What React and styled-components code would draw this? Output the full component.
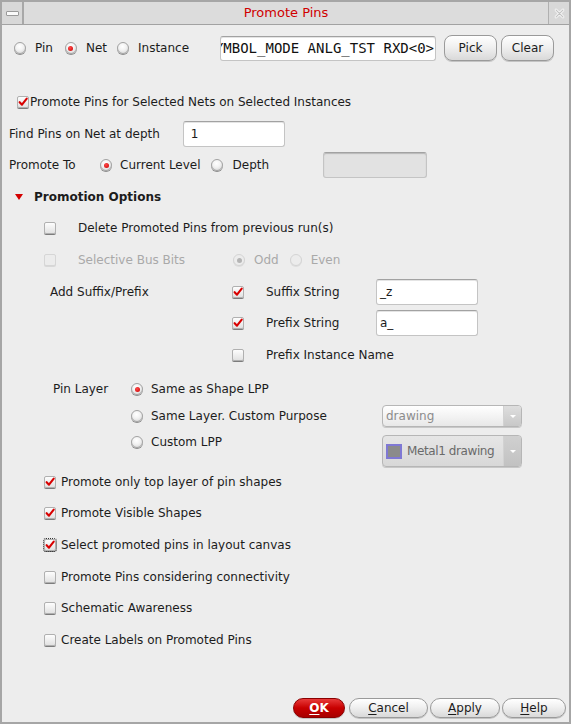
import React from 'react';
import styled, { createGlobalStyle, css } from 'styled-components';

const GlobalStyle = createGlobalStyle`
  html, body {
    margin: 0;
    padding: 0;
    background: #ffffff;
  }
  body {
    font-family: "DejaVu Sans", Verdana, sans-serif;
    font-size: 12px;
    color: #1c1c1c;
  }
`;

const Window = styled.div`
  width: 571px;
  height: 724px;
  box-sizing: border-box;
  border: 2px solid #a6a6a6;
  background: #ededed;
  display: flex;
  flex-direction: column;
`;

const TitleBar = styled.div`
  display: flex;
  height: 22px;
  border-bottom: 1px solid #a2a2a2;
  background: #dcdcdc;
`;

const TitleBox = styled.div`
  width: 20px;
  display: flex;
  align-items: center;
  justify-content: center;
  background: #d8d8d8;
  ${p => (p.$right ? 'border-left: 1px solid #b0b0b0;' : 'border-right: 2px solid #a8a8a8;')}
`;

const MinGlyph = styled.span`
  width: 11px;
  height: 3px;
  border: 1px solid #9a9a9a;
  border-radius: 1px;
  background: #fafafa;
`;

const Title = styled.div`
  flex: 1;
  text-align: center;
  line-height: 22px;
  font-size: 13px;
  color: #d00000;
`;

const Content = styled.div`
  flex: 1;
  display: flex;
  flex-direction: column;
`;

const Row = styled.div`
  display: flex;
  align-items: ${p => (p.$top ? 'flex-start' : 'center')};
  height: ${p => (p.$h ? `${p.$h}px` : 'auto')};
  margin-top: ${p => p.$mt || 0}px;
  padding-left: ${p => p.$pl || 0}px;
  flex-shrink: 0;
`;

const Cell = styled.div`
  display: flex;
  align-items: center;
  height: ${p => (p.$h ? `${p.$h}px` : 'auto')};
  flex-shrink: 0;
`;

const Label = styled.span`
  white-space: nowrap;
  color: ${p => (p.$disabled ? '#a9a9a9' : '#1c1c1c')};
  font-weight: ${p => (p.$bold ? 'bold' : 'normal')};
  width: ${p => (p.$w ? `${p.$w}px` : 'auto')};
  margin-left: ${p => p.$ml || 0}px;
  flex-shrink: 0;
`;

const CheckBox = styled.span`
  width: 12px;
  height: 12px;
  box-sizing: border-box;
  border: 1px solid ${p => (p.$disabled ? '#d6d6d6' : '#b0b0b0')};
  border-radius: 2px;
  background: ${p => (p.$disabled ? '#ececec' : 'linear-gradient(#fdfdfd, #e2e2e2)')};
  box-shadow: 0 1px 0 ${p => (p.$disabled ? '#d8d8d8' : '#7c7c7c')};
  display: flex;
  align-items: center;
  justify-content: center;
  flex-shrink: 0;
  ${p => p.$focus && css`
    outline: 1px dotted #333;
    outline-offset: 0;
  `}
`;

const RadioRing = styled.span`
  width: 12px;
  height: 12px;
  box-sizing: border-box;
  border-radius: 50%;
  border: 1px solid ${p => (p.$disabled ? '#d4d4d4' : '#a2a2a2')};
  background: ${p => (p.$disabled
    ? '#ececec'
    : 'radial-gradient(circle at 45% 35%, #ffffff 0%, #f2f2f2 45%, #cfcfcf 100%)')};
  box-shadow: 0 1px 0 ${p => (p.$disabled ? '#dedede' : '#8e8e8e')};
  display: flex;
  align-items: center;
  justify-content: center;
  flex-shrink: 0;
`;

const RadioDot = styled.span`
  width: 5px;
  height: 5px;
  border-radius: 50%;
  background: ${p => (p.$disabled ? '#b4b4b4' : 'radial-gradient(circle at 40% 35%, #ff4a4a, #c80000)')};
`;

const Option = styled.span`
  display: inline-flex;
  align-items: center;
  gap: ${p => p.$gap || 9}px;
  margin-right: ${p => p.$mr || 0}px;
  flex-shrink: 0;
`;

const Field = styled.div`
  box-sizing: border-box;
  width: ${p => p.$w}px;
  height: ${p => p.$h || 26}px;
  margin-left: ${p => p.$ml || 0}px;
  border: 1px solid #c4c4c4;
  border-top-color: #a2a2a2;
  border-radius: 3px;
  background: ${p => (p.$disabled ? '#e2e2e2' : '#ffffff')};
  box-shadow: ${p => (p.$disabled ? 'inset 0 1px 1px #b8b8b8' : 'inset 0 1px 0 #e4e4e4')};
  display: flex;
  align-items: center;
  justify-content: ${p => (p.$end ? 'flex-end' : 'flex-start')};
  padding: 0 ${p => (p.$end ? 1 : 3)}px 0 3px;
  overflow: hidden;
  white-space: nowrap;
  flex-shrink: 0;
`;

const MonoText = styled.span`
  font-family: "DejaVu Sans Mono", "Liberation Mono", monospace;
  font-size: 14px;
  color: #111;
  flex-shrink: 0;
`;

const Button = styled.button`
  box-sizing: border-box;
  width: ${p => p.$w}px;
  height: ${p => p.$h || 20}px;
  margin-left: ${p => p.$ml || 0}px;
  padding: 0;
  font-family: inherit;
  font-size: 12px;
  border-radius: ${p => (p.$h && p.$h > 22 ? 8 : 10)}px;
  border: 1px solid #9a9a9a;
  color: #1c1c1c;
  background: linear-gradient(#ffffff, #f0f0f0 45%, #d9d9d9);
  box-shadow: 0 1px 0 #c4c4c4;
  flex-shrink: 0;
  ${p => p.$primary && css`
    border-color: #8a0000;
    color: #ffffff;
    font-weight: bold;
    background: linear-gradient(#e83a3a, #c80000 50%, #a80000);
  `}
  u {
    text-decoration-thickness: 1px;
    text-underline-offset: 2px;
  }
`;

const Triangle = styled.span`
  width: 0;
  height: 0;
  border-left: 4.5px solid transparent;
  border-right: 4.5px solid transparent;
  border-top: 6px solid #d40000;
  flex-shrink: 0;
`;

const Combo = styled.div`
  box-sizing: border-box;
  width: 140px;
  height: ${p => p.$h}px;
  margin-left: ${p => p.$ml || 0}px;
  margin-top: ${p => p.$mt || 0}px;
  border: 1px solid #b6b6b6;
  border-radius: 4px;
  background: ${p => (p.$dim ? 'linear-gradient(#e6e6e6, #d8d8d8)' : 'linear-gradient(#ffffff, #e8e8e8)')};
  box-shadow: 0 1px 0 #c8c8c8;
  display: flex;
  overflow: hidden;
  flex-shrink: 0;
`;

const ComboValue = styled.div`
  flex: 1;
  min-width: 0;
  display: flex;
  align-items: center;
  gap: 5px;
  padding-left: 3px;
  white-space: nowrap;
  overflow: hidden;
  color: ${p => (p.$dim ? '#6a6a6a' : '#8c8c8c')};
  font-size: 12px;
  letter-spacing: ${p => (p.$dim ? '-0.4px' : '0')};
`;

const ComboArrow = styled.div`
  width: 17px;
  flex-shrink: 0;
  border-left: 1px solid #d2d2d2;
  background: ${p => (p.$dim ? 'linear-gradient(#d0d0d0, #c2c2c2)' : 'linear-gradient(#dedede, #c8c8c8)')};
  display: flex;
  align-items: center;
  justify-content: center;

  &::after {
    content: '';
    border-left: 3px solid transparent;
    border-right: 3px solid transparent;
    border-top: 3px solid #ffffff;
  }
`;

const Swatch = styled.span`
  width: 16px;
  height: 15px;
  box-sizing: border-box;
  border: 2px solid #7f78d4;
  background: #8b8b8b;
  flex-shrink: 0;
`;

const Footer = styled.div`
  margin-top: auto;
  display: flex;
  justify-content: flex-end;
  padding: 0 3px 4px 0;
`;

function Check({ checked, disabled, focus }) {
  return (
    <CheckBox $disabled={disabled} $focus={focus}>
      {checked && (
        <svg width="11" height="10" viewBox="0 0 11 10">
          <path d="M1.8 5.2 L4.4 8 L9.6 1.2" fill="none" stroke="#d80000" strokeWidth="2.3" strokeLinecap="round" strokeLinejoin="round" />
        </svg>
      )}
    </CheckBox>
  );
}

function Radio({ selected, disabled }) {
  return (
    <RadioRing $disabled={disabled}>
      {selected && <RadioDot $disabled={disabled} />}
    </RadioRing>
  );
}

function CloseGlyph() {
  return (
    <svg width="11" height="11" viewBox="0 0 11 11">
      <path d="M2 2 L9 9 M9 2 L2 9" stroke="#ffffff" strokeWidth="2.6" strokeLinecap="round" />
      <path d="M2 2 L9 9 M9 2 L2 9" stroke="#c4c4c4" strokeWidth="1.2" strokeLinecap="round" />
    </svg>
  );
}

const bottomChecks = [
  { text: 'Promote only top layer of pin shapes', checked: true, mt: 5 },
  { text: 'Promote Visible Shapes', checked: true, mt: 11 },
  { text: 'Select promoted pins in layout canvas', checked: true, focus: true, mt: 12 },
  { text: 'Promote Pins considering connectivity', mt: 12 },
  { text: 'Schematic Awareness', mt: 11 },
  { text: 'Create Labels on Promoted Pins', mt: 12 },
];

export default function App() {
  return (
    <>
      <GlobalStyle />
      <Window>
        <TitleBar>
          <TitleBox><MinGlyph /></TitleBox>
          <Title>Promote Pins</Title>
          <TitleBox $right><CloseGlyph /></TitleBox>
        </TitleBar>
        <Content>
          <Row $h={28} $mt={9} $pl={12}>
            <Option $mr={12}><Radio /><Label>Pin</Label></Option>
            <Option $mr={10}><Radio selected /><Label>Net</Label></Option>
            <Option><Radio /><Label>Instance</Label></Option>
            <Field $w={216} $h={25} $ml={31} $end>
              <MonoText>SYMBOL_MODE ANLG_TST RXD&lt;0&gt;</MonoText>
            </Field>
            <Button $w={53} $h={26} $ml={8}>Pick</Button>
            <Button $w={53} $h={26} $ml={4}>Clear</Button>
          </Row>

          <Row $h={20} $mt={30} $pl={15}>
            <Check checked />
            <Label $ml={1}>Promote Pins for Selected Nets on Selected Instances</Label>
          </Row>

          <Row $h={26} $mt={9} $pl={7}>
            <Label $w={174}>Find Pins on Net at depth</Label>
            <Field $w={102}>&nbsp;1</Field>
          </Row>

          <Row $h={26} $mt={5} $pl={7}>
            <Label $w={91}>Promote To</Label>
            <Option $gap={8} $mr={10}><Radio selected /><Label>Current Level</Label></Option>
            <Option $gap={10}><Radio /><Label>Depth</Label></Option>
            <Field $w={104} $ml={54} $disabled />
          </Row>

          <Row $h={20} $mt={9} $pl={13}>
            <Triangle />
            <Label $bold $ml={11}>Promotion Options</Label>
          </Row>

          <Row $h={20} $mt={11} $pl={42}>
            <Check />
            <Label $ml={22}>Delete Promoted Pins from previous run(s)</Label>
          </Row>

          <Row $h={20} $mt={12} $pl={42}>
            <Check disabled />
            <Label $ml={22} $w={155} $disabled>Selective Bus Bits</Label>
            <Option $mr={11}><Radio selected disabled /><Label $disabled>Odd</Label></Option>
            <Option><Radio disabled /><Label $disabled>Even</Label></Option>
          </Row>

          <Row $h={26} $mt={9} $pl={48}>
            <Label $w={182}>Add Suffix/Prefix</Label>
            <Check checked />
            <Label $ml={22} $w={110}>Suffix String</Label>
            <Field $w={102}>_z</Field>
          </Row>

          <Row $h={26} $mt={5} $pl={230}>
            <Check checked />
            <Label $ml={22} $w={110}>Prefix String</Label>
            <Field $w={102}>a_</Field>
          </Row>

          <Row $h={20} $mt={9} $pl={230}>
            <Check />
            <Label $ml={22}>Prefix Instance Name</Label>
          </Row>

          <Row $h={20} $mt={14} $pl={51}>
            <Label $w={78}>Pin Layer</Label>
            <Option $gap={8}><Radio selected /><Label>Same as Shape LPP</Label></Option>
          </Row>

          <Row $h={22} $mt={6} $pl={129}>
            <Option $gap={8}><Radio /><Label $w={231}>Same Layer. Custom Purpose</Label></Option>
            <Combo $h={22}>
              <ComboValue>drawing</ComboValue>
              <ComboArrow />
            </Combo>
          </Row>

          <Row $top $mt={5} $pl={129}>
            <Cell $h={20}>
              <Option $gap={8}><Radio /><Label $w={231}>Custom LPP</Label></Option>
            </Cell>
            <Combo $h={32} $mt={3} $dim>
              <ComboValue $dim><Swatch />Metal1 drawing</ComboValue>
              <ComboArrow $dim />
            </Combo>
          </Row>

          {bottomChecks.map(item => (
            <Row key={item.text} $h={20} $mt={item.mt} $pl={42}>
              <Check checked={item.checked} focus={item.focus} />
              <Label $ml={5}>{item.text}</Label>
            </Row>
          ))}

          <Footer>
            <Button $w={52} $primary><u>O</u>K</Button>
            <Button $w={79} $ml={4}><u>C</u>ancel</Button>
            <Button $w={70} $ml={2}><u>A</u>pply</Button>
            <Button $w={64} $ml={2}><u>H</u>elp</Button>
          </Footer>
        </Content>
      </Window>
    </>
  );
}
